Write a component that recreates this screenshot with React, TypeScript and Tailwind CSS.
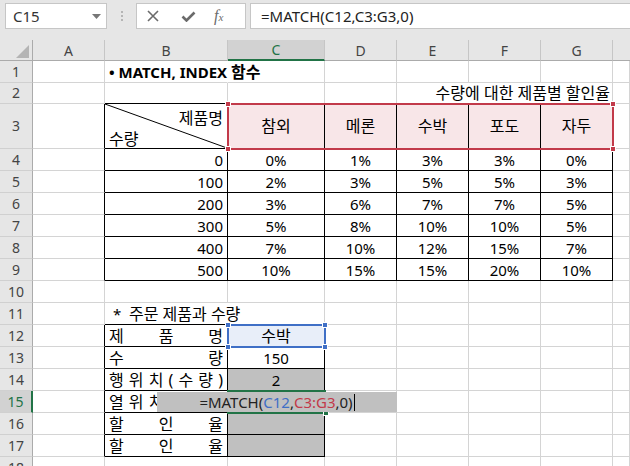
import React from "react";

const A = "w-[72px]";
const B = "w-[123px]";
const C = "w-[97px]";
const N = "w-[72px]";
const H = "flex-1";

const uiFont = "font-['Noto_Sans','Noto_Sans_CJK_KR',sans-serif]";
const ko = "text-[16px]";

type CellProps = {
  w: string;
  rb?: boolean;
  bb?: boolean;
  hideR?: boolean;
  className?: string;
  children?: React.ReactNode;
};

function Cell({ w, rb, bb, hideR, className = "", children }: CellProps) {
  const right = rb ? "border-r-black" : hideR ? "border-r-white" : "border-r-[#d4d4d4]";
  const bottom = bb ? "border-b-black" : "border-b-[#d4d4d4]";
  return (
    <div className={`${w} shrink-0 h-full flex items-center border-r border-b ${right} ${bottom} ${className}`}>
      {children}
    </div>
  );
}

function Row({ n, h = "h-[22px]", active, children }: { n: number; h?: string; active?: boolean; children?: React.ReactNode }) {
  return (
    <div className={`flex ${h}`}>
      <div
        className={`w-[33px] shrink-0 h-full flex items-center justify-center border-b border-b-[#d0d0d0] text-[14px] ${
          active
            ? "bg-[#d2d2d2] text-[#217346] border-r-2 border-r-[#217346]"
            : "bg-[#e6e6e6] text-[#444] border-r border-r-[#ababab]"
        }`}
      >
        {n}
      </div>
      {children}
    </div>
  );
}

function Spread({ text }: { text: string }) {
  return (
    <div className={`w-full flex justify-between px-[4px] ${ko}`}>
      {text.split("").map((c, i) => (
        <span key={i}>{c}</span>
      ))}
    </div>
  );
}

function Handle({ pos, color }: { pos: string; color: string }) {
  return <div className={`absolute w-[6px] h-[6px] border border-white ${color} ${pos}`} />;
}

function Rest({ bb }: { bb?: boolean }) {
  return (
    <>
      <Cell w={N} bb={bb} />
      <Cell w={N} bb={bb} />
      <Cell w={N} bb={bb} />
      <Cell w={N} bb={bb} />
      <Cell w={H} />
    </>
  );
}

const qty = [0, 100, 200, 300, 400, 500];
const pct = [
  [0, 1, 3, 3, 0],
  [2, 3, 5, 5, 3],
  [3, 6, 7, 7, 5],
  [5, 8, 10, 10, 5],
  [7, 10, 12, 15, 7],
  [10, 15, 15, 20, 10],
];
const fruits = ["참외", "메론", "수박", "포도", "자두"];

function TopBar() {
  return (
    <div className="h-[40px] bg-[#e6e6e6] flex items-start pt-[3px] pl-[5px]">
      <div className="w-[102px] h-[26px] bg-white border border-[#c6c6c6] flex items-center justify-between pl-[7px] pr-[5px] text-[15px] text-[#333]">
        <span>C15</span>
        <svg width="9" height="5" viewBox="0 0 9 5">
          <path d="M0 0h9L4.5 5z" fill="#777" />
        </svg>
      </div>
      <div className="ml-[14px] mt-[8px] flex flex-col gap-[2px]">
        <div className="w-[2px] h-[2px] bg-[#b5b5b5]" />
        <div className="w-[2px] h-[2px] bg-[#b5b5b5]" />
        <div className="w-[2px] h-[2px] bg-[#b5b5b5]" />
      </div>
      <div className="ml-[13px] w-[110px] h-[26px] bg-white border border-[#c6c6c6] flex items-center pl-[10px] gap-[22px]">
        <svg width="12" height="12" viewBox="0 0 12 12">
          <path d="M1 1l10 10M11 1L1 11" stroke="#6b6b6b" strokeWidth="1.6" />
        </svg>
        <svg width="15" height="11" viewBox="0 0 15 11">
          <path d="M1.5 5.5l4 4L13.5 1.5" stroke="#6b6b6b" strokeWidth="2.6" fill="none" />
        </svg>
        <span className="font-['Liberation_Serif',serif] italic text-[16px] text-[#6b6b6b] leading-none -ml-[4px]">
          f<span className="text-[11px]">x</span>
        </span>
      </div>
      <div className="ml-[4px] flex-1 h-[26px] bg-white border border-[#c6c6c6] border-r-0 flex items-center pl-[10px] text-[15px] text-[#222]">
        =MATCH(C12,C3:G3,0)
      </div>
    </div>
  );
}

function ColHeaders() {
  const cols = [
    { l: "A", w: A },
    { l: "B", w: B },
    { l: "C", w: C, sel: true },
    { l: "D", w: N },
    { l: "E", w: N },
    { l: "F", w: N },
    { l: "G", w: N },
  ];
  return (
    <div className="flex h-[21px] text-[14px]">
      <div className="w-[33px] shrink-0 h-full bg-[#e6e6e6] border-r border-b border-[#ababab] flex items-end justify-end pr-[3px] pb-[2px]">
        <svg width="13" height="13" viewBox="0 0 13 13">
          <path d="M13 0V13H0z" fill="#b4b4b4" />
        </svg>
      </div>
      {cols.map((c) =>
        c.sel ? (
          <div
            key={c.l}
            className={`${c.w} shrink-0 h-full bg-[#d2d2d2] text-[#217346] border-r border-r-[#c6c6c6] border-b-2 border-b-[#217346] flex items-center justify-center`}
          >
            {c.l}
          </div>
        ) : (
          <div
            key={c.l}
            className={`${c.w} shrink-0 h-full bg-[#e6e6e6] text-[#444] border-r border-r-[#c6c6c6] border-b border-b-[#ababab] flex items-center justify-center`}
          >
            {c.l}
          </div>
        )
      )}
      <div className="flex-1 h-full bg-[#e6e6e6] border-b border-b-[#ababab]" />
    </div>
  );
}

export default function App() {
  return (
    <div className={`w-[630px] h-[466px] overflow-hidden bg-white ${uiFont} text-black`}>
      <TopBar />
      <ColHeaders />
      <div className="text-[15px] leading-[20px]">
        <Row n={1}>
          <Cell w={A} />
          <Cell w={B} hideR className="pl-[4px] font-bold whitespace-nowrap">
            <span>
              • MATCH, INDEX <span className={ko}>함수</span>
            </span>
          </Cell>
          <Cell w={C} />
          <Rest />
        </Row>
        <Row n={2} h="h-[21px]">
          <Cell w={A} />
          <Cell w={B} bb />
          <Cell w={C} bb />
          <Cell w={N} bb />
          <Cell w={N} bb hideR />
          <Cell w={N} bb hideR />
          <Cell w={N} bb className="justify-end pr-[2px] whitespace-nowrap">
            <span className={ko}>수량에 대한 제품별 할인율</span>
          </Cell>
          <Cell w={H} />
        </Row>
        <Row n={3} h="h-[45px]">
          <Cell w={A} rb />
          <Cell w={B} rb bb className={`relative flex-col items-stretch justify-between px-[4px] pt-[4px] ${ko}`}>
            <svg className="absolute inset-0 w-full h-full" viewBox="0 0 100 100" preserveAspectRatio="none">
              <line x1="0" y1="0" x2="100" y2="100" stroke="black" strokeWidth="1" vectorEffect="non-scaling-stroke" />
            </svg>
            <span className="self-end">제품명</span>
            <span className="self-start leading-[17px]">수량</span>
          </Cell>
          {fruits.map((f, i) => (
            <Cell key={f} w={i === 0 ? C : N} rb bb className="relative justify-center bg-[#f8e6e8]">
              {i === 0 && (
                <div className="absolute left-[-1px] top-[-1px] w-[387px] h-[47px] border-2 border-[#c23a4a] z-10">
                  <Handle color="bg-[#c23a4a]" pos="left-[-4px] top-[-4px]" />
                  <Handle color="bg-[#c23a4a]" pos="right-[-4px] top-[-4px]" />
                  <Handle color="bg-[#c23a4a]" pos="left-[-4px] bottom-[-4px]" />
                  <Handle color="bg-[#c23a4a]" pos="right-[-4px] bottom-[-4px]" />
                </div>
              )}
              <span className={ko}>{f}</span>
            </Cell>
          ))}
          <Cell w={H} />
        </Row>
        {qty.map((q, r) => (
          <Row key={q} n={r + 4}>
            <Cell w={A} rb />
            <Cell w={B} rb bb className="justify-end pr-[4px]">
              {q}
            </Cell>
            {pct[r].map((p, i) => (
              <Cell key={i} w={i === 0 ? C : N} rb bb className="justify-center">
                {p}%
              </Cell>
            ))}
            <Cell w={H} />
          </Row>
        ))}
        <Row n={10}>
          <Cell w={A} />
          <Cell w={B} />
          <Cell w={C} />
          <Rest />
        </Row>
        <Row n={11}>
          <Cell w={A} />
          <Cell w={B} bb hideR className="pl-[4px] whitespace-pre">
            <span>
              {" *  "}
              <span className={ko}>주문 제품과 수량</span>
            </span>
          </Cell>
          <Cell w={C} bb />
          <Rest />
        </Row>
        <Row n={12}>
          <Cell w={A} rb />
          <Cell w={B} rb bb>
            <Spread text="제품명" />
          </Cell>
          <Cell w={C} rb bb className="relative justify-center bg-[#e8eef9]">
            <div className="absolute left-[-1px] top-[-1px] w-[99px] h-[24px] border-2 border-[#3f6fc6] z-10">
              <Handle color="bg-[#3f6fc6]" pos="left-[-4px] top-[-4px]" />
              <Handle color="bg-[#3f6fc6]" pos="right-[-4px] top-[-4px]" />
              <Handle color="bg-[#3f6fc6]" pos="left-[-4px] bottom-[-4px]" />
              <Handle color="bg-[#3f6fc6]" pos="right-[-4px] bottom-[-4px]" />
            </div>
            <span className={ko}>수박</span>
          </Cell>
          <Rest />
        </Row>
        <Row n={13}>
          <Cell w={A} rb />
          <Cell w={B} rb bb>
            <Spread text="수량" />
          </Cell>
          <Cell w={C} rb bb className="justify-center">
            150
          </Cell>
          <Rest />
        </Row>
        <Row n={14}>
          <Cell w={A} rb />
          <Cell w={B} rb bb>
            <Spread text="행위치(수량)" />
          </Cell>
          <Cell w={C} rb bb className="justify-center bg-[#c0c0c0]">
            2
          </Cell>
          <Rest />
        </Row>
        <Row n={15} active>
          <Cell w={A} rb />
          <Cell w={B} rb bb>
            <Spread text="열위치(제품)" />
          </Cell>
          <Cell w={C} rb bb className="relative">
            <div className="absolute left-[-1px] top-[-1px] w-[99px] h-[24px] border-y-2 border-[#217346] z-10">
              <div className="absolute right-[-3px] bottom-[-4px] w-[6px] h-[6px] bg-[#217346] border border-white" />
            </div>
            <div className="absolute left-[-71px] top-[1px] w-[240px] h-[20px] bg-[#c0c0c0] z-20 flex items-center justify-center whitespace-nowrap text-[#222]">
              <span>=MATCH(</span>
              <span className="text-[#3f6fc6]">C12</span>
              <span>,</span>
              <span className="text-[#c23a4a]">C3:G3</span>
              <span>,0)</span>
              <span className="w-px h-[17px] bg-black ml-[1px]" />
            </div>
          </Cell>
          <Rest />
        </Row>
        <Row n={16}>
          <Cell w={A} rb />
          <Cell w={B} rb bb>
            <Spread text="할인율" />
          </Cell>
          <Cell w={C} rb bb className="bg-[#c0c0c0]" />
          <Rest />
        </Row>
        <Row n={17}>
          <Cell w={A} rb />
          <Cell w={B} rb bb>
            <Spread text="할인율" />
          </Cell>
          <Cell w={C} rb bb className="bg-[#c0c0c0]" />
          <Rest />
        </Row>
        <Row n={18}>
          <Cell w={A} />
          <Cell w={B} />
          <Cell w={C} />
          <Rest />
        </Row>
      </div>
    </div>
  );
}
